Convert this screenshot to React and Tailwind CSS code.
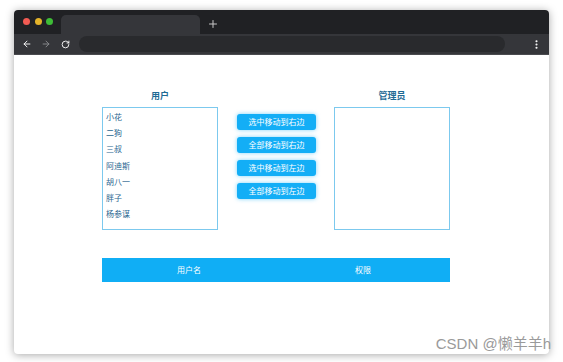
import { ArrowLeft, ArrowRight, RotateCw, Plus, EllipsisVertical } from 'lucide-react';

const users = ['小花', '二狗', '三叔', '阿迪斯', '胡八一', '胖子', '杨参谋'];
const actions = ['选中移动到右边', '全部移动到右边', '选中移动到左边', '全部移动到左边'];

const font = { fontFamily: '"Noto Sans CJK SC", "Noto Sans", sans-serif' };

const App = () => {
  return (
    <div className="relative w-[563px] h-[362px] bg-white overflow-hidden" style={font}>
      {/* ── browser window ─────────────────────────────────────────── */}
      <div className="ml-[14px] mt-[10px] w-[535px] h-[344px] rounded-[4px] overflow-hidden bg-white shadow-[0_1px_8px_rgba(0,0,0,0.35)] flex flex-col">
        {/* title bar */}
        <div className="h-[24px] bg-[#202124] flex items-end">
          <div className="flex items-center gap-[4.5px] pl-[9px] h-full pb-[2px]">
            <span className="w-[7px] h-[7px] rounded-full bg-[#f25b53]" />
            <span className="w-[7px] h-[7px] rounded-full bg-[#e4b32a]" />
            <span className="w-[7px] h-[7px] rounded-full bg-[#3ebd37]" />
          </div>
          <div className="ml-[8px] w-[139px] h-[19px] rounded-t-[5px] bg-[#35363a]" />
          <Plus size={12} strokeWidth={2} className="ml-[7px] mb-[4px] text-[#c8c8c8]" />
        </div>
        {/* toolbar */}
        <div className="h-[21px] bg-[#35363a] flex items-center border-b border-[#4a4b4f]">
          <ArrowLeft size={10} strokeWidth={2.2} className="ml-[8px] text-white" />
          <ArrowRight size={10} strokeWidth={2.2} className="ml-[9px] text-[#8c8d90]" />
          <RotateCw size={9} strokeWidth={2.4} className="ml-[10px] text-white" />
          <div className="ml-[9px] w-[426px] h-[16px] rounded-full bg-[#292a2d]" />
          <EllipsisVertical size={11} strokeWidth={2.6} className="ml-[26px] text-white" />
        </div>

        {/* ── page content ─────────────────────────────────────────── */}
        <div className="flex-1 pl-[88px] pt-[35px]">
          <div className="flex">
            <div className="w-[116px] flex flex-col items-center">
              <div className="h-[12px] leading-[12px] text-[9px] font-bold text-[#1e6a94]">用户</div>
              <ul className="mt-[5px] w-full h-[123px] border border-[#7cc9ee] pt-[1px] pl-[3px]">
                {users.map((u) => (
                  <li key={u} className="h-[16.2px] leading-[16px] text-[8px] text-[#2a6690]">{u}</li>
                ))}
              </ul>
            </div>

            <div className="ml-[19px] w-[79px] pt-[24px] flex flex-col gap-[7px]">
              {actions.map((a) => (
                <button
                  key={a}
                  className="h-[16px] rounded-[3px] bg-[#13aef6] text-white text-[8px] leading-[16px] shadow-[0_0_4px_rgba(19,174,246,0.55)]"
                >
                  {a}
                </button>
              ))}
            </div>

            <div className="ml-[18px] w-[116px] flex flex-col items-center">
              <div className="h-[12px] leading-[12px] text-[9px] font-bold text-[#1e6a94]">管理员</div>
              <div className="mt-[5px] w-full h-[123px] border border-[#7cc9ee]" />
            </div>
          </div>

          <div className="mt-[28px] w-[348px] h-[24px] bg-[#10aef5] flex items-center text-white text-[8px]">
            <span className="w-[174px] text-center">用户名</span>
            <span className="w-[174px] text-center">权限</span>
          </div>
        </div>
      </div>

      {/* watermark */}
      <div className="absolute right-[12px] bottom-[9px] text-[15px] leading-[18px] text-[#9a9a9a]" style={{ fontFamily: '"Liberation Sans", "Noto Sans CJK SC", sans-serif' }}>
        CSDN @懒羊羊h
      </div>
    </div>
  );
};

export default App;
